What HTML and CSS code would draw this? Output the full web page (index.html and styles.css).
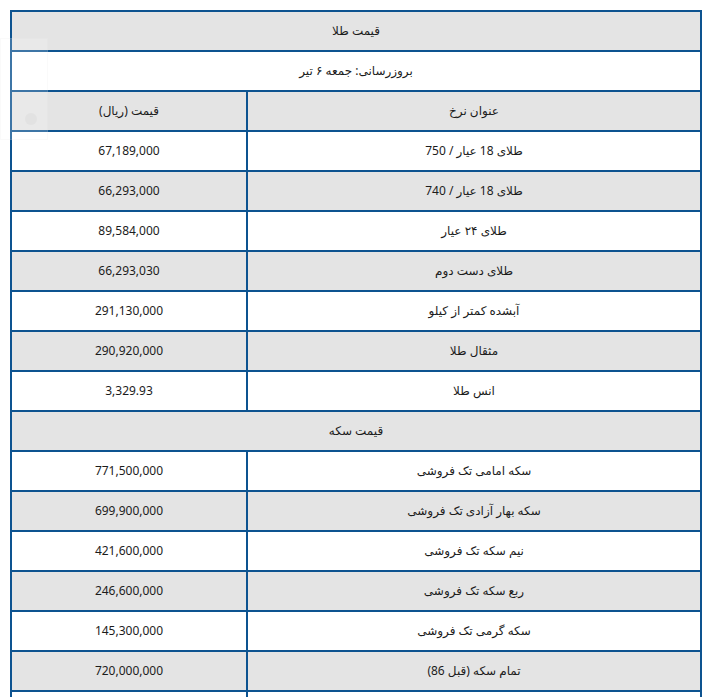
FILE: index.html
```html
<!DOCTYPE html>
<html lang="fa">
<head>
<meta charset="utf-8">
<title>قیمت طلا</title>
<link rel="stylesheet" href="styles.css">
</head>
<body>
<div class="wrap">
  <table class="prices" dir="rtl">
    <colgroup><col class="c-name"><col class="c-price"></colgroup>
    <tbody>
      <tr class="g"><td colspan="2">قیمت طلا</td></tr>
      <tr><td colspan="2">بروزرسانی: جمعه ۶ تیر</td></tr>
      <tr class="g"><td>عنوان نرخ</td><td>قیمت (ریال)</td></tr>
      <tr><td>طلای 18 عیار / 750</td><td>67,189,000</td></tr>
      <tr class="g"><td>طلای 18 عیار / 740</td><td>66,293,000</td></tr>
      <tr><td>طلای ۲۴ عیار</td><td>89,584,000</td></tr>
      <tr class="g"><td>طلای دست دوم</td><td>66,293,030</td></tr>
      <tr><td>آبشده کمتر از کیلو</td><td>291,130,000</td></tr>
      <tr class="g"><td>مثقال طلا</td><td>290,920,000</td></tr>
      <tr><td>انس طلا</td><td>3,329.93</td></tr>
      <tr class="g"><td colspan="2">قیمت سکه</td></tr>
      <tr><td>سکه امامی تک فروشی</td><td>771,500,000</td></tr>
      <tr class="g"><td>سکه بهار آزادی تک فروشی</td><td>699,900,000</td></tr>
      <tr><td>نیم سکه تک فروشی</td><td>421,600,000</td></tr>
      <tr class="g"><td>ربع سکه تک فروشی</td><td>246,600,000</td></tr>
      <tr><td>سکه گرمی تک فروشی</td><td>145,300,000</td></tr>
      <tr class="g"><td>تمام سکه (قبل 86)</td><td>720,000,000</td></tr>
      <tr class="last"><td></td><td></td></tr>
    </tbody>
  </table>
  <div class="ghost"><span class="ghost-dot"></span></div>
</div>
</body>
</html>
```
FILE: styles.css
```css
html, body {
  margin: 0;
  padding: 0;
  background: #ffffff;
}
.wrap {
  position: relative;
  padding: 10px;
}
.prices {
  width: 690px;
  border-collapse: collapse;
  table-layout: fixed;
  font-family: "Noto Sans", "DejaVu Sans", sans-serif;
  font-size: 12px;
  color: #1c1c1c;
}
.c-name { width: 454px; }
.c-price { width: 236px; }
.prices td {
  border: 2px solid #0d5390;
  padding: 0 4px;
  height: 38px;
  line-height: 38px;
  text-align: center;
  white-space: nowrap;
  overflow: hidden;
}
.prices tr.g td {
  background: #e4e4e4;
}
.ghost {
  position: absolute;
  left: 0;
  top: 38px;
  width: 48px;
  height: 102px;
  background: rgba(255, 255, 255, 0.2);
  border: 1px solid rgba(210, 210, 210, 0.12);
  box-sizing: border-box;
  pointer-events: none;
}
.ghost-dot {
  position: absolute;
  left: 24px;
  top: 74px;
  width: 12px;
  height: 12px;
  border-radius: 50%;
  background: rgba(170, 170, 170, 0.1);
}
```
